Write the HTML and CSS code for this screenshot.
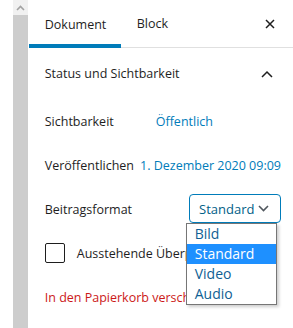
FILE: index.html
```html
<!DOCTYPE html>
<html>
<head>
  <title>Dokument-Einstellungen</title>
  <link rel="stylesheet" href="styles.css">
</head>
<body>
  <div class="gutter"></div>
  <div class="scrollbar">
    <div class="scroll-up">
      <svg width="9" height="6" viewBox="0 0 9 6"><path d="M1 5 L4.5 1.5 L8 5" fill="none" stroke="#a3a3a3" stroke-width="1.6"/></svg>
    </div>
    <div class="scroll-thumb"></div>
  </div>

  <div class="sidebar">
    <div class="tabs">
      <div class="tab active">Dokument</div>
      <div class="tab">Block</div>
      <div class="close">
        <svg width="10" height="10" viewBox="0 0 10 10"><path d="M1 1 L9 9 M9 1 L1 9" stroke="#1e1e1e" stroke-width="1.5"/></svg>
      </div>
    </div>

    <div class="panel-title">
      <span>Status und Sichtbarkeit</span>
      <svg class="chevron" width="12" height="8" viewBox="0 0 12 8"><path d="M1 7 L6 2 L11 7" fill="none" stroke="#1e1e1e" stroke-width="1.5"/></svg>
    </div>

    <div class="row">
      <span class="label wide">Sichtbarkeit</span>
      <span class="link">Öffentlich</span>
    </div>
    <div class="row">
      <span class="label">Veröffentlichen</span>
      <span class="link date">1. Dezember 2020 09:09</span>
    </div>
    <div class="row">
      <span class="label">Beitragsformat</span>
      <div class="select">
        <span>Standard</span>
        <svg width="11" height="7" viewBox="0 0 11 7"><path d="M1 1 L5.5 5.5 L10 1" fill="none" stroke="#50575e" stroke-width="1.6"/></svg>
      </div>
    </div>
    <div class="row">
      <span class="checkbox"></span>
      <span class="label">Ausstehende Überprüfung</span>
    </div>
    <div class="row">
      <span class="trash">In den Papierkorb verschieben</span>
    </div>

    <ul class="dropdown">
      <li>Bild</li>
      <li class="selected">Standard</li>
      <li>Video</li>
      <li>Audio</li>
    </ul>
  </div>
</body>
</html>
```

FILE: styles.css
```css
body {
  margin: 0;
  display: flex;
  height: 328px;
  overflow: hidden;
  font-family: "Open Sans", "Noto Sans", sans-serif;
  font-size: 12.5px;
  color: #1e1e1e;
  background-color: #fff;
  white-space: nowrap;
}

.gutter {
  width: 14px;
}

.scrollbar {
  width: 15px;
  display: flex;
  flex-direction: column;
}
.scroll-up {
  height: 15px;
  background-color: #f1f1f1;
  display: flex;
  align-items: center;
  justify-content: center;
}
.scroll-thumb {
  flex: 1;
  background-color: #cdcdcd;
}

.sidebar {
  flex: 1;
  position: relative;
  padding-left: 1px;
}

/* tabs */
.tabs {
  display: flex;
  height: 48px;
  box-shadow: inset 0 -1px #e0e0e0;
}
.tab {
  display: flex;
  align-items: center;
  padding: 0 16px 1px 16px;
}
.tab.active {
  width: 60px;
  box-shadow: inset 0 -4px #007cba;
  padding-bottom: 0;
}
.close {
  margin-left: auto;
  width: 28px;
  margin-right: 9px;
  display: flex;
  align-items: center;
  justify-content: center;
}

.panel-title {
  height: 51px;
  display: flex;
  align-items: center;
  padding: 0 20px 0 16px;
}
.panel-title .chevron {
  margin-left: auto;
}

.row {
  height: 44px;
  display: flex;
  align-items: center;
  padding: 0 12px 0 16px;
}
.label.wide {
  width: 111px;
}
.link {
  color: #007cba;
}
.date {
  margin-left: 6px;
}

.select {
  margin-left: auto;
  margin-top: -1px;
  box-sizing: border-box;
  border: 1.5px solid #007cba;
  border-radius: 4px;
  width: 92px;
  height: 29px;
  display: flex;
  align-items: center;
  padding: 0 11px 0 9px;
  font-size: 13px;
  color: #016087;
}
.select svg {
  margin-left: auto;
}

.checkbox {
  width: 18px;
  height: 18px;
  border: 1px solid #1e1e1e;
  border-radius: 2px;
  margin-right: 12px;
}

.trash {
  color: #cc1818;
}

/* open select list */
.dropdown {
  position: absolute;
  top: 223px;
  left: 158px;
  width: 89px;
  margin: 0;
  padding: 0;
  list-style: none;
  border: 1px solid #767676;
  background-color: #fff;
  box-shadow: 2px 2px 3px rgba(0, 0, 0, 0.2);
  font-size: 14px;
  color: #0f5f94;
}
.dropdown li {
  height: 20px;
  line-height: 20px;
  padding-left: 8px;
}
.dropdown li.selected {
  background-color: #1e90ff;
  color: #fff;
}
```
